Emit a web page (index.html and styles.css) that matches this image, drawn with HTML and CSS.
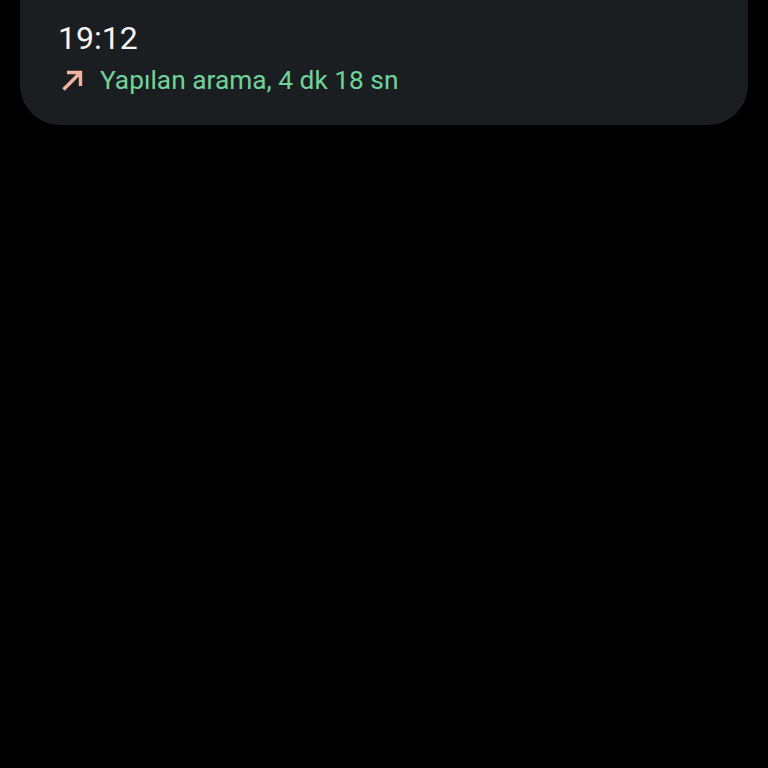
FILE: index.html
```html
<!DOCTYPE html>
<html lang="tr">
<head>
<meta charset="utf-8">
<link rel="stylesheet" href="styles.css">
</head>
<body>
<div class="card">
  <div class="time">19:12</div>
  <div class="call">
    <svg class="arrow" viewBox="0 0 24 24" width="24" height="24"><path d="M3.5 21.5 L20 5 M7 4.5 H20.5 V18" fill="none" stroke="#f0b4a2" stroke-width="3.4" stroke-linecap="butt"/></svg>
    <span class="label">Yapılan arama, 4 dk 18 sn</span>
  </div>
</div>
</body>
</html>
```
FILE: styles.css
```css
html, body {
  margin: 0;
  padding: 0;
  background: #000;
  height: 100%;
}
body {
  font-family: Roboto, "Noto Sans", sans-serif;
}
.card {
  margin: 0 20px;
  background: #1b1e20;
  border-radius: 0 0 40px 40px;
  padding: 18px 38px 30px;
  box-sizing: border-box;
  height: 125px;
}
.time {
  color: #f4f4f4;
  font-size: 32px;
  line-height: 40px;
}
.call {
  display: flex;
  align-items: center;
  gap: 16px;
  margin-top: 5px;
}
.arrow {
  display: block;
  margin-left: 2px;
}
.label {
  color: #70d49a;
  font-size: 26.3px;
  line-height: 34px;
}
```
